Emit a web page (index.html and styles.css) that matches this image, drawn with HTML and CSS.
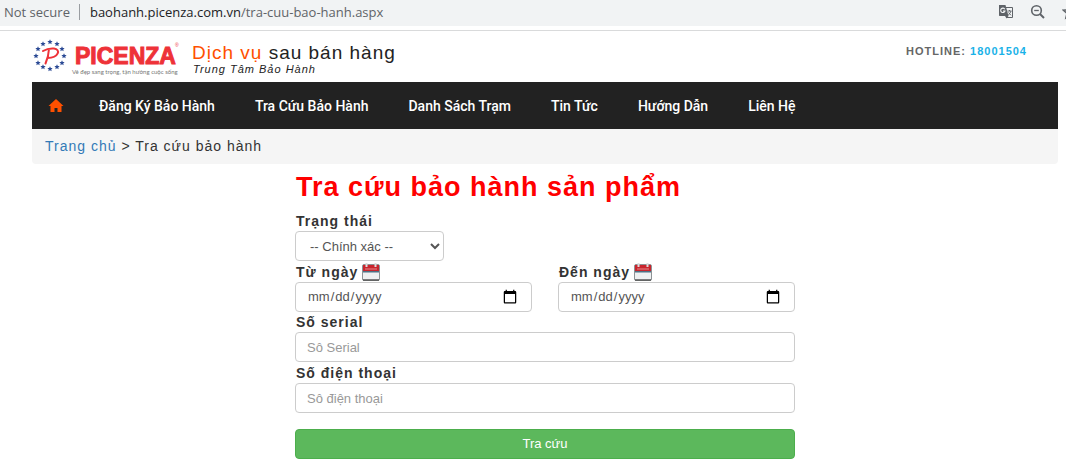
FILE: index.html
```html
<!DOCTYPE html>
<html lang="vi">
<head>
<meta charset="utf-8">
<title>Tra cứu bảo hành</title>
<link rel="stylesheet" href="styles.css">
</head>
<body>
<div class="browser-bar">
  <span class="security">Not secure</span>
  <span class="address"><span class="host">baohanh.picenza.com.vn</span>/tra-cuu-bao-hanh.aspx</span>
  <div class="browser-tools">
    <svg width="16" height="16" viewBox="0 0 16 16" aria-hidden="true">
      <path d="M6 3.5h8.5v10H8.500" fill="none" stroke="#5f6368"/>
      <path d="M1 1h6.500l3 11H1.500L1 11.500z" fill="#5f6368"/>
      <path d="M7 12h3.500L8.500 14.500z" fill="#5f6368"/>
      <path d="M6.800 5.200A2.200 2.200 0 1 0 7 7H5" fill="none" stroke="#f1f3f4" stroke-width="1.100"/>
      <path d="M9.500 7h4M11.500 6v1M13 7q-.6 2.500-2.800 4M10.500 8.500l2.500 2.800" fill="none" stroke="#5f6368" stroke-width=".9"/>
    </svg>
    <svg width="16" height="16" viewBox="0 0 16 16" aria-hidden="true">
      <circle cx="6.500" cy="6.500" r="4.800" fill="none" stroke="#5f6368" stroke-width="1.600"/>
      <path d="M4.200 6.500h4.600" stroke="#5f6368" stroke-width="1.300"/>
      <path d="M10 10l4 4" stroke="#5f6368" stroke-width="1.900"/>
    </svg>
    <svg width="16" height="16" viewBox="0 0 16 16" aria-hidden="true">
      <path d="M8 1.500l1.900 4.300 4.700.4-3.600 3.100 1.100 4.600L8 11.500l-4.100 2.400L5 9.300 1.400 6.200l4.700-.4z" fill="none" stroke="#5f6368" stroke-width="1.500"/>
    </svg>
  </div>
</div>

<div class="page">
  <header class="masthead">
    <svg class="logo" width="148" height="42" viewBox="0 0 148 42" role="img" aria-label="Picenza">
      <defs><path id="star" d="M0-2.700L.8-.9 2.600-.9 1.200.4 1.700 2.300 0 1.200-1.700 2.300-1.200.4-2.600-.9-.8-.9z" fill="#2b4a95"/></defs>
      <use href="#star" x="18" y="6"/><use href="#star" x="25" y="8"/><use href="#star" x="30" y="13"/>
      <use href="#star" x="32" y="20"/><use href="#star" x="30" y="27"/><use href="#star" x="25" y="31"/>
      <use href="#star" x="18" y="33"/><use href="#star" x="11" y="31"/><use href="#star" x="6" y="27"/>
      <use href="#star" x="4" y="20"/><use href="#star" x="6" y="13"/><use href="#star" x="11" y="8"/>
      <path d="M17 13q-.5 8-3.500 14.500M11 15q5-3 11-2.500c7 .5 5 9.500-6.500 9.500" fill="none" stroke="#ee3238" stroke-width="2" stroke-linecap="round"/>
      <text class="logo-name" x="43" y="28">PICENZA</text>
      <text class="logo-mark" x="143" y="11">®</text>
      <text class="logo-tagline" x="40" y="38">Vẻ đẹp sang trọng, tận hưởng cuộc sống</text>
    </svg>
    <div class="slogan">
      <p class="slogan-main"><span class="accent">Dịch vụ</span> sau bán hàng</p>
      <p class="slogan-sub">Trung Tâm Bảo Hành</p>
    </div>
    <p class="hotline">HOTLINE: <a href="tel:18001504">18001504</a></p>
  </header>

  <nav class="menu">
    <a class="home" href="#" aria-label="Trang chủ">
      <svg width="16" height="14" viewBox="0 0 16 14"><path d="M8 0l7.500 7H13.500V13H9.500V9H6.500V13H2.500V7H.5z" fill="#ff5000"/></svg>
    </a>
    <a href="#">Đăng Ký Bảo Hành</a>
    <a href="#">Tra Cứu Bảo Hành</a>
    <a href="#">Danh Sách Trạm</a>
    <a href="#">Tin Tức</a>
    <a href="#">Hướng Dẫn</a>
    <a href="#">Liên Hệ</a>
  </nav>
  <div class="breadcrumb"><a href="#">Trang chủ</a> &gt; Tra cứu bảo hành</div>

  <form class="lookup">
    <h1>Tra cứu bảo hành sản phẩm</h1>
    <label for="status">Trạng thái</label>
    <select class="control status" id="status"><option>-- Chính xác --</option></select>
    <div class="dates">
      <div class="field">
        <label for="from">Từ ngày
          <svg class="calendar" width="18" height="18" viewBox="0 0 18 18" aria-hidden="true"><rect x=".5" y="1.500" width="17" height="16" rx="1.500" fill="#eef0f1" stroke="#8d9295"/><path d="M1 2h16v6H1z" fill="#c9252d"/><path d="M1 8h16v1.500H1z" fill="#4d7185"/><path d="M1 17h16" stroke="#555" stroke-width="1.500"/><path d="M4.500 0v4M13.500 0v4" stroke="#ddd" stroke-width="2"/><path d="M3 6h12" stroke="#e58a8d"/></svg>
        </label>
        <input class="control" type="date" id="from">
      </div>
      <div class="field">
        <label for="to">Đến ngày
          <svg class="calendar" width="18" height="18" viewBox="0 0 18 18" aria-hidden="true"><rect x=".5" y="1.500" width="17" height="16" rx="1.500" fill="#eef0f1" stroke="#8d9295"/><path d="M1 2h16v6H1z" fill="#c9252d"/><path d="M1 8h16v1.500H1z" fill="#4d7185"/><path d="M1 17h16" stroke="#555" stroke-width="1.500"/><path d="M4.500 0v4M13.500 0v4" stroke="#ddd" stroke-width="2"/><path d="M3 6h12" stroke="#e58a8d"/></svg>
        </label>
        <input class="control" type="date" id="to">
      </div>
    </div>
    <label for="serial">Số serial</label>
    <input class="control" type="text" id="serial" placeholder="Sô Serial">
    <label for="phone">Số điện thoại</label>
    <input class="control" type="text" id="phone" placeholder="Sô điện thoại">
    <button class="submit" type="button">Tra cứu</button>
  </form>
</div>
</body>
</html>
```
FILE: styles.css
```css
* {
  box-sizing: border-box;
}

body {
  margin: 0;
  background: #fff;
  color: #333;
  font: 14px/20px "Liberation Sans", Arial, sans-serif;
}

p,
h1 {
  margin: 0;
}

a {
  text-decoration: none;
}

.browser-bar {
  display: flex;
  align-items: center;
  height: 31px;
  padding: 0 0 6px 4px;
  border-bottom: 1px solid #d9dadb;
  background: linear-gradient(#f1f3f4 26px, #fff 26px);
  color: #5f6368;
  font: 13px/20px "Open Sans", "Noto Sans", sans-serif;
  white-space: nowrap;
  overflow: hidden;
}

.security {
  margin-right: 9px;
}

.address {
  padding-left: 10px;
  border-left: 1px solid #9a9da1;
  line-height: 16px;
}

.host {
  color: #202124;
}

.browser-tools {
  display: flex;
  gap: 16px;
  margin-left: auto;
  margin-right: -12px;
}

.page {
  margin: 0 8px 0 32px;
  letter-spacing: 1px;
}

.masthead {
  display: flex;
  align-items: flex-start;
  height: 51px;
  padding: 5px 31px 0 0;
}

.logo {
  letter-spacing: 0;
}

.logo-name {
  fill: #ee3238;
  stroke: #ee3238;
  font-size: 23px;
  font-weight: bold;
}

.logo-mark {
  fill: #ee3238;
  font-size: 5px;
}

.logo-tagline {
  fill: #777;
  font: 6px Lato, sans-serif;
}

.slogan {
  margin-left: 12px;
  color: #222;
}

.slogan-main {
  padding-top: 7px;
  font-size: 19px;
  line-height: 20px;
}

.slogan-sub {
  padding-left: 1px;
  font-size: 11px;
  font-style: italic;
  line-height: 12px;
}

.accent {
  color: #ff5000;
}

.hotline {
  margin-left: auto;
  padding-top: 5px;
  color: #666;
  font-size: 11px;
  font-weight: bold;
}

.hotline a {
  color: #1ab2e8;
}

.menu {
  display: flex;
  align-items: center;
  gap: 40px;
  height: 47px;
  padding-left: 16px;
  background: #222;
  letter-spacing: 0;
}

.menu a {
  color: #fff;
  font: 500 14px/20px Roboto, sans-serif;
}

.menu .home {
  display: flex;
  margin-right: -5px;
}

.breadcrumb {
  height: 35px;
  padding: 7px 13px;
  border-radius: 0 0 4px 4px;
  background: #f5f5f5;
}

.breadcrumb a {
  color: #337ab7;
}

.lookup {
  max-width: 500px;
  margin: 0 auto;
}

.lookup h1 {
  padding: 7px 0 7px 1px;
  color: #f00;
  font-size: 27px;
  line-height: 32px;
}

.lookup label {
  display: flex;
  align-items: center;
  gap: 4px;
  height: 21px;
  padding-left: 1px;
  font-weight: bold;
}

.dates + label {
  height: 20px;
}

.control {
  display: block;
  width: 100%;
  height: 30px;
  padding: 5px 11px;
  border: 1px solid #ccc;
  border-radius: 4px;
  background: #fff;
  color: #555;
  font: 13px/18px "Liberation Sans", Arial, sans-serif;
}

.control::placeholder {
  color: #999;
}

.control::-webkit-calendar-picker-indicator {
  width: 16px;
  height: 16px;
}

.status {
  width: 149px;
  padding: 5px 0 5px 10px;
}

.dates {
  display: flex;
  gap: 26px;
}

.field {
  flex: 1;
}

.calendar {
  flex: none;
}

.submit {
  display: block;
  width: 100%;
  height: 30px;
  margin-top: 16px;
  border: 1px solid #4cae4c;
  border-radius: 4px;
  background: #5cb85c;
  color: #fff;
  font: 13px/18px "Liberation Sans", Arial, sans-serif;
}
```
